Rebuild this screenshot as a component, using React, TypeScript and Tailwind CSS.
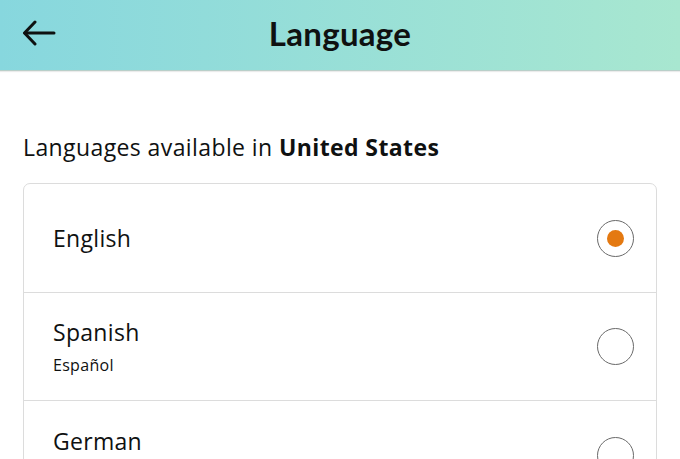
import React from "react";

function Radio({ checked }: { checked?: boolean }) {
  return (
    <div className="w-[37px] h-[37px] rounded-full border-[1.5px] border-[#6a6a6a] flex items-center justify-center shrink-0">
      {checked && <div className="w-[17px] h-[17px] rounded-full bg-[#e47911]" />}
    </div>
  );
}

export default function App() {
  return (
    <div className="w-[680px] h-[459px] overflow-hidden bg-white font-['Open_Sans',sans-serif] text-[#0f1111]">
      <header className="h-[71px] bg-gradient-to-r from-[#87d7de] to-[#a8e7d0] border-b border-[#b9cfc9] shadow-[0_1px_1px_rgba(0,0,0,0.08)] relative flex items-center justify-center">
        <button className="absolute left-[22px] top-[19px] w-[36px] h-[28px] flex items-center">
          <svg width="34" height="26" viewBox="0 0 34 26" fill="none" stroke="#0f1111" strokeWidth="3" strokeLinecap="round" strokeLinejoin="round">
            <path d="M32 13H3" />
            <path d="M13 2L2.5 13L13 24" />
          </svg>
        </button>
        <h1 className="font-['Lato',sans-serif] font-bold text-[33px] tracking-[0.3px] text-[#0f1111] -mt-[2px]">Language</h1>
      </header>

      <div className="px-[23px] pt-[61px]">
        <p className="text-[23px] leading-[30px] tracking-[0.4px]">
          Languages available in <span className="font-bold">United States</span>
        </p>
        <div className="mt-[21px] border border-[#dcdcdc] rounded-[7px] w-[634px]">
          <div className="h-[109px] flex items-center justify-between pl-[29px] pr-[22px] border-b border-[#dcdcdc]">
            <span className="text-[23px] tracking-[0.3px] leading-[30px]">English</span>
            <Radio checked />
          </div>
          <div className="h-[108px] flex items-center justify-between pl-[29px] pr-[22px] border-b border-[#dcdcdc]">
            <div className="flex flex-col">
              <span className="text-[23px] tracking-[0.3px] leading-[30px]">Spanish</span>
              <span className="text-[16px] tracking-[0.3px] leading-[22px] mt-[7px]">Español</span>
            </div>
            <Radio />
          </div>
          <div className="h-[108px] flex items-center justify-between pl-[29px] pr-[22px]">
            <div className="flex flex-col">
              <span className="text-[23px] tracking-[0.3px] leading-[30px]">German</span>
              <span className="text-[16px] tracking-[0.3px] leading-[22px] mt-[7px]">Deutsch</span>
            </div>
            <Radio />
          </div>
        </div>
      </div>
    </div>
  );
}
